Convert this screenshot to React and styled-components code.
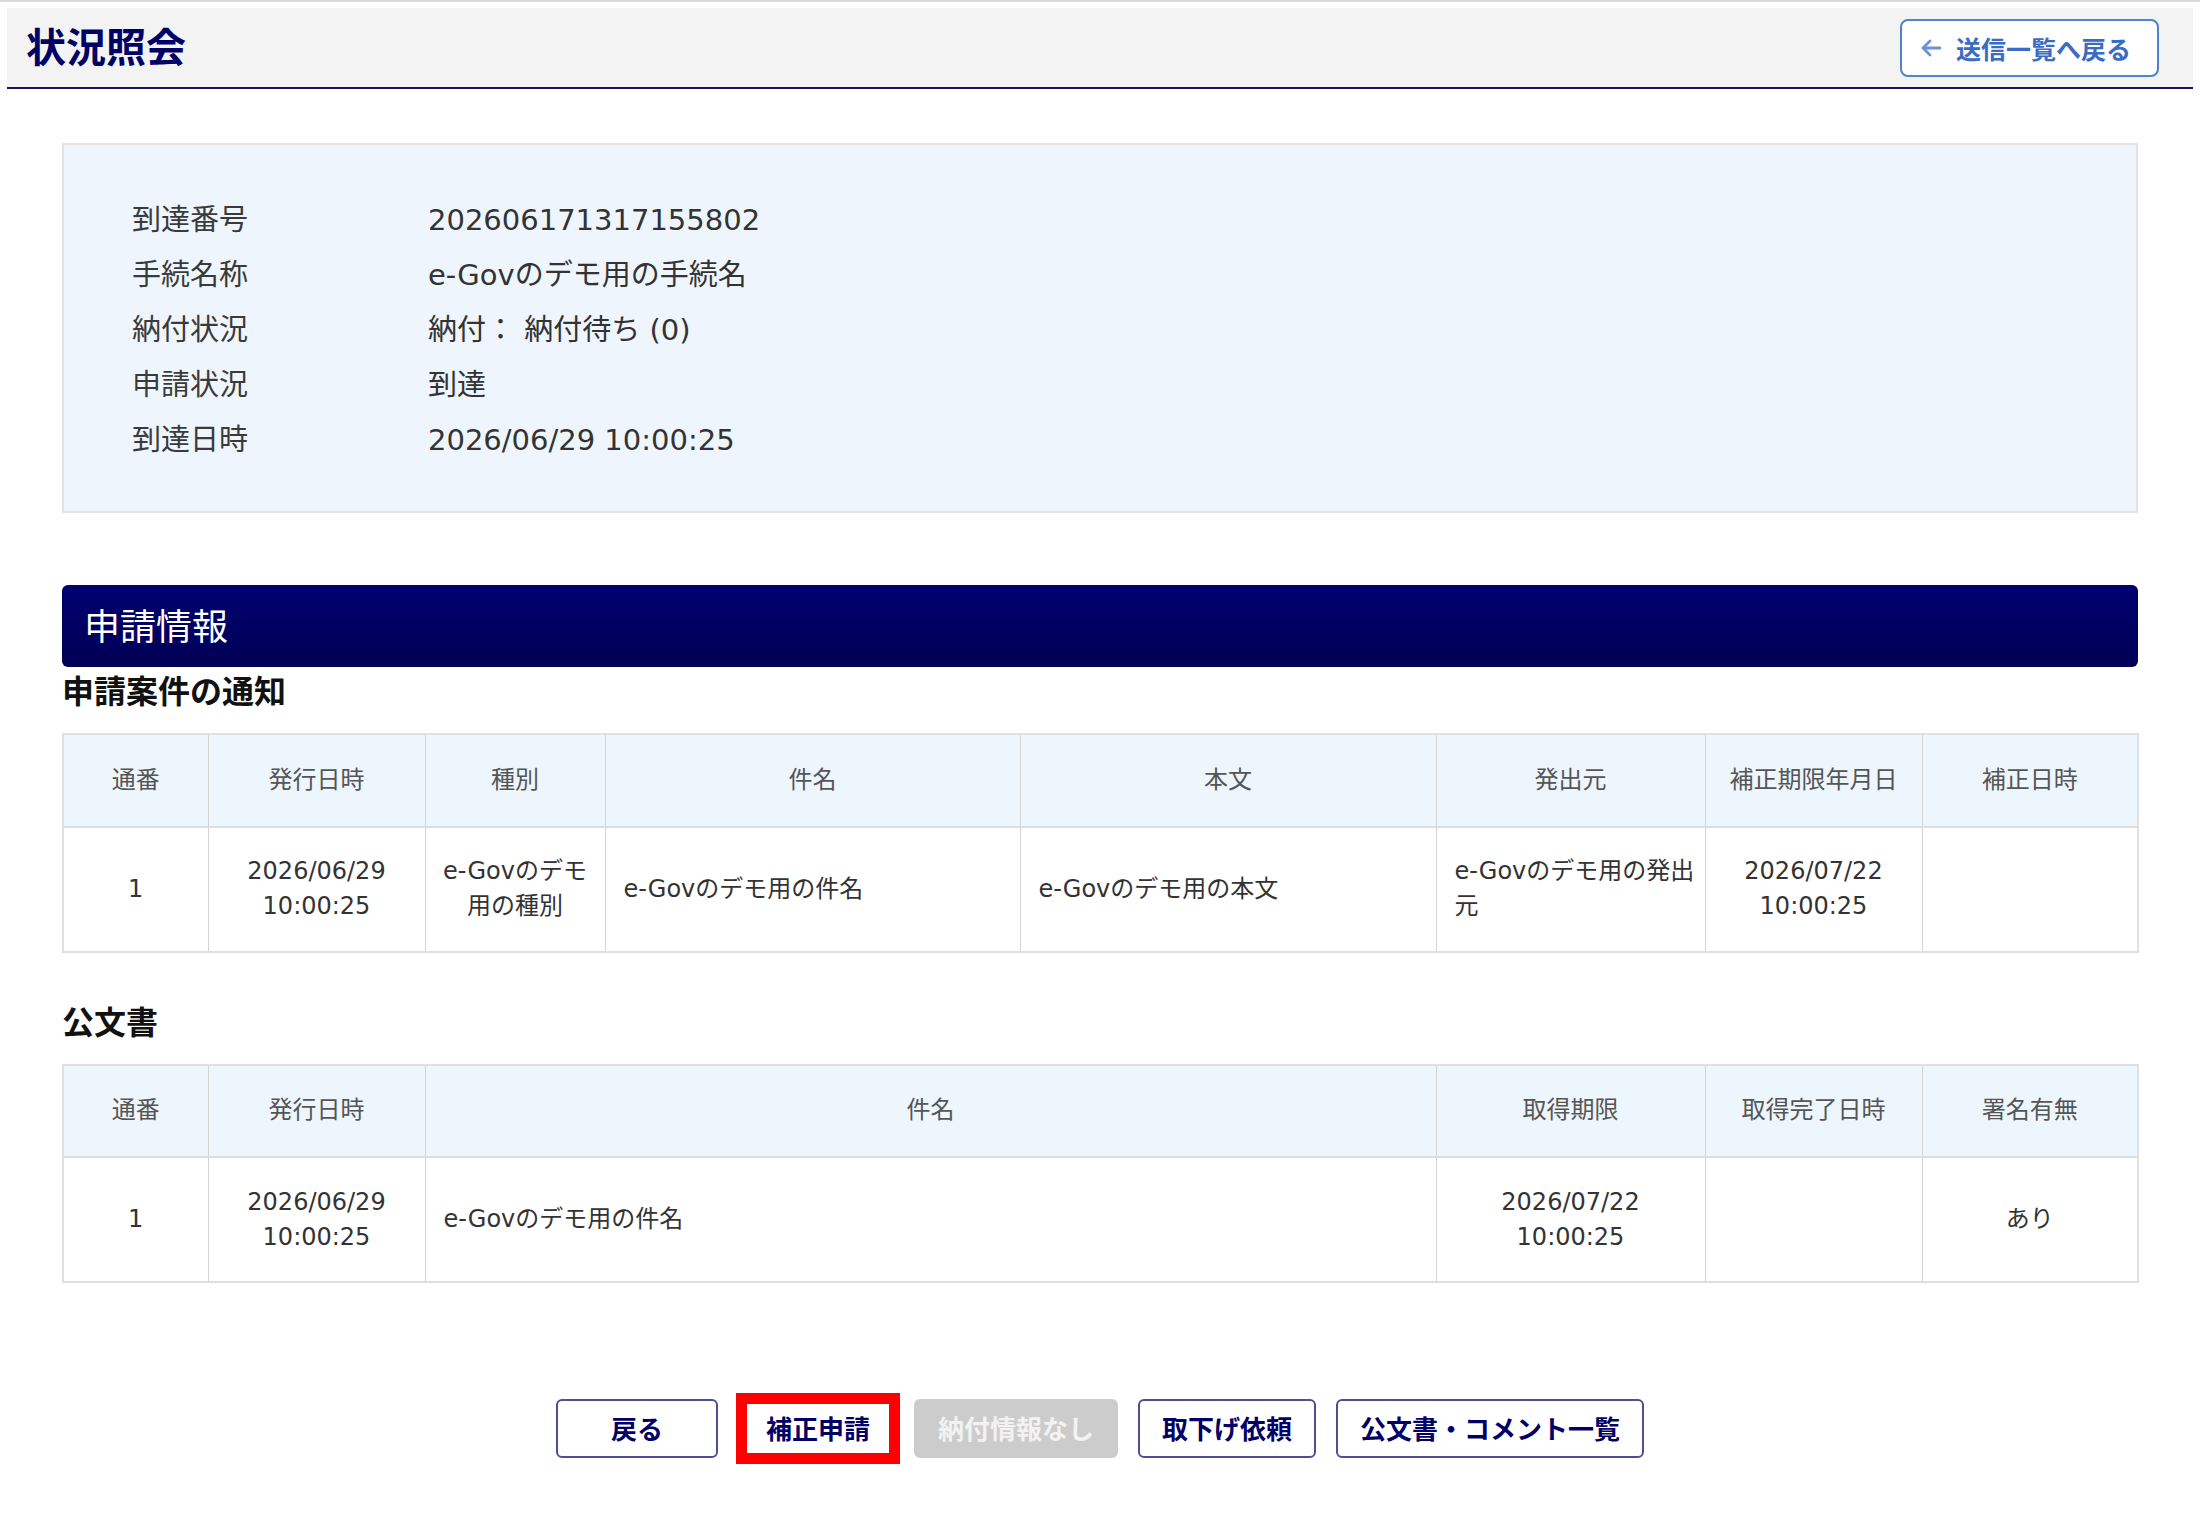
import React from "react";
import styled, { createGlobalStyle } from "styled-components";

const GlobalStyle = createGlobalStyle`
  html, body { margin: 0; padding: 0; background: #ffffff; }
  body {
    font-family: "DejaVu Sans", "Noto Sans CJK JP", sans-serif;
    color: #333333;
  }
  * { box-sizing: border-box; }
`;

const TopRule = styled.div`
  height: 2px;
  background: #d9d9d9;
`;

const Page = styled.div`
  padding: 6px 7px 60px;
`;

const Header = styled.header`
  height: 81px;
  background: #f3f3f3;
  border-bottom: 2px solid #15156e;
  display: flex;
  align-items: center;
  justify-content: space-between;
  padding: 0 34px 0 19px;
`;

const Title = styled.h1`
  margin: 0;
  font-family: "Noto Sans CJK JP", sans-serif;
  font-size: 40px;
  font-weight: 700;
  line-height: 1;
  color: #000066;
  padding-bottom: 6px;
`;

const BackLink = styled.button`
  height: 58px;
  display: flex;
  align-items: center;
  gap: 14px;
  padding: 0 26px 0 18px;
  background: #ffffff;
  border: 2px solid #4f83d1;
  border-radius: 8px;
  color: #3a6cc4;
  font-family: "Noto Sans CJK JP", sans-serif;
  font-size: 25px;
  font-weight: 700;
  cursor: pointer;
`;

const Main = styled.main`
  padding: 0 55px;
  margin-top: 54px;
`;

const InfoPanel = styled.section`
  background: #eef5fc;
  border: 2px solid #e2e2e2;
  padding: 48px 68px 43px;
`;

const InfoRow = styled.div`
  display: grid;
  grid-template-columns: 296px 1fr;
  font-size: 29px;
  line-height: 55px;
  color: #333333;
`;

const InfoLabel = styled.div`
  color: #3a3a3a;
`;

const InfoValue = styled.div``;

const SectionBar = styled.h2`
  margin: 72px 0 0;
  height: 82px;
  border-radius: 6px;
  background: linear-gradient(#000070, #000056);
  color: #ffffff;
  font-family: "Noto Sans CJK JP", sans-serif;
  font-size: 36px;
  font-weight: 400;
  display: flex;
  align-items: center;
  padding: 0 0 4px 22px;
`;

const SubTitle = styled.h3`
  margin: ${(p) => p.$top || 0}px 0 0;
  font-family: "Noto Sans CJK JP", sans-serif;
  font-size: 32px;
  font-weight: 700;
  line-height: 44px;
  color: #111111;
`;

const DataTable = styled.table`
  margin-top: 22px;
  width: 100%;
  border-collapse: collapse;
  table-layout: fixed;
  border: 2px solid #e0e0e0;
  font-size: 24px;
  line-height: 35px;
`;

const Col = styled.col`
  width: ${(p) => p.$w}px;
`;

const Th = styled.th`
  background: #edf5fd;
  color: #555555;
  font-weight: 400;
  text-align: center;
  padding: 27.5px 8px 28px;
  border-left: 1px solid #d3d3d3;
  border-right: 1px solid #d3d3d3;
  border-bottom: 2px solid #dedede;
`;

const Td = styled.td`
  color: #333333;
  text-align: ${(p) => p.$align || "center"};
  padding: 26.5px ${(p) => (p.$align === "left" ? "10px 26.5px 18px" : "12px")};
  border-left: 1px solid #d3d3d3;
  border-right: 1px solid #d3d3d3;
  vertical-align: middle;
`;

const ButtonRow = styled.div`
  margin-top: 116px;
  display: flex;
  justify-content: center;
  gap: 20px;
`;

const ActionButton = styled.button`
  height: 59px;
  min-width: ${(p) => p.$min || 0}px;
  padding: 0 22px 2px;
  background: ${(p) => (p.disabled ? "#cccccc" : "#ffffff")};
  border: 2px solid ${(p) => (p.disabled ? "#cccccc" : "#4d4d99")};
  border-radius: ${(p) => (p.$highlight ? 0 : 6)}px;
  color: ${(p) => (p.disabled ? "#f2f2f2" : "#000066")};
  font-family: "Noto Sans CJK JP", sans-serif;
  font-size: 26px;
  font-weight: 700;
  cursor: ${(p) => (p.disabled ? "default" : "pointer")};
  outline: ${(p) => (p.$highlight ? "11px solid #ff0000" : "none")};
  outline-offset: -5px;
  margin-left: ${(p) => (p.$highlight ? 4 : 0)}px;
`;

const ArrowIcon = () => (
  <svg width="22" height="22" viewBox="0 0 22 22" fill="none">
    <path
      d="M20 11H3M10 4l-7 7 7 7"
      stroke="#6a93d8"
      strokeWidth="2.8"
      strokeLinecap="round"
      strokeLinejoin="round"
    />
  </svg>
);

const info = [
  ["到達番号", "202606171317155802"],
  ["手続名称", "e-Govのデモ用の手続名"],
  ["納付状況", "納付： 納付待ち (0)"],
  ["申請状況", "到達"],
  ["到達日時", "2026/06/29 10:00:25"],
];

export default function App() {
  return (
    <>
      <GlobalStyle />
      <TopRule />
      <Page>
        <Header>
          <Title>状況照会</Title>
          <BackLink>
            <ArrowIcon />
            送信一覧へ戻る
          </BackLink>
        </Header>

        <Main>
          <InfoPanel>
            {info.map(([k, v]) => (
              <InfoRow key={k}>
                <InfoLabel>{k}</InfoLabel>
                <InfoValue>{v}</InfoValue>
              </InfoRow>
            ))}
          </InfoPanel>

          <SectionBar>申請情報</SectionBar>

          <SubTitle>申請案件の通知</SubTitle>
          <DataTable>
            <colgroup>
              <Col $w={145} />
              <Col $w={217} />
              <Col $w={180} />
              <Col $w={415} />
              <Col $w={416} />
              <Col $w={269} />
              <Col $w={217} />
              <Col $w={216} />
            </colgroup>
            <thead>
              <tr>
                <Th>通番</Th>
                <Th>発行日時</Th>
                <Th>種別</Th>
                <Th>件名</Th>
                <Th>本文</Th>
                <Th>発出元</Th>
                <Th>補正期限年月日</Th>
                <Th>補正日時</Th>
              </tr>
            </thead>
            <tbody>
              <tr>
                <Td>1</Td>
                <Td>2026/06/29 10:00:25</Td>
                <Td>e-Govのデモ用の種別</Td>
                <Td $align="left">e-Govのデモ用の件名</Td>
                <Td $align="left">e-Govのデモ用の本文</Td>
                <Td $align="left">e-Govのデモ用の発出元</Td>
                <Td>2026/07/22 10:00:25</Td>
                <Td></Td>
              </tr>
            </tbody>
          </DataTable>

          <SubTitle $top={45}>公文書</SubTitle>
          <DataTable>
            <colgroup>
              <Col $w={145} />
              <Col $w={217} />
              <Col $w={1011} />
              <Col $w={269} />
              <Col $w={217} />
              <Col $w={216} />
            </colgroup>
            <thead>
              <tr>
                <Th>通番</Th>
                <Th>発行日時</Th>
                <Th>件名</Th>
                <Th>取得期限</Th>
                <Th>取得完了日時</Th>
                <Th>署名有無</Th>
              </tr>
            </thead>
            <tbody>
              <tr>
                <Td>1</Td>
                <Td>2026/06/29 10:00:25</Td>
                <Td $align="left">e-Govのデモ用の件名</Td>
                <Td>2026/07/22 10:00:25</Td>
                <Td></Td>
                <Td>あり</Td>
              </tr>
            </tbody>
          </DataTable>

          <ButtonRow>
            <ActionButton $min={162}>戻る</ActionButton>
            <ActionButton $highlight>補正申請</ActionButton>
            <ActionButton disabled>納付情報なし</ActionButton>
            <ActionButton>取下げ依頼</ActionButton>
            <ActionButton>公文書・コメント一覧</ActionButton>
          </ButtonRow>
        </Main>
      </Page>
    </>
  );
}
